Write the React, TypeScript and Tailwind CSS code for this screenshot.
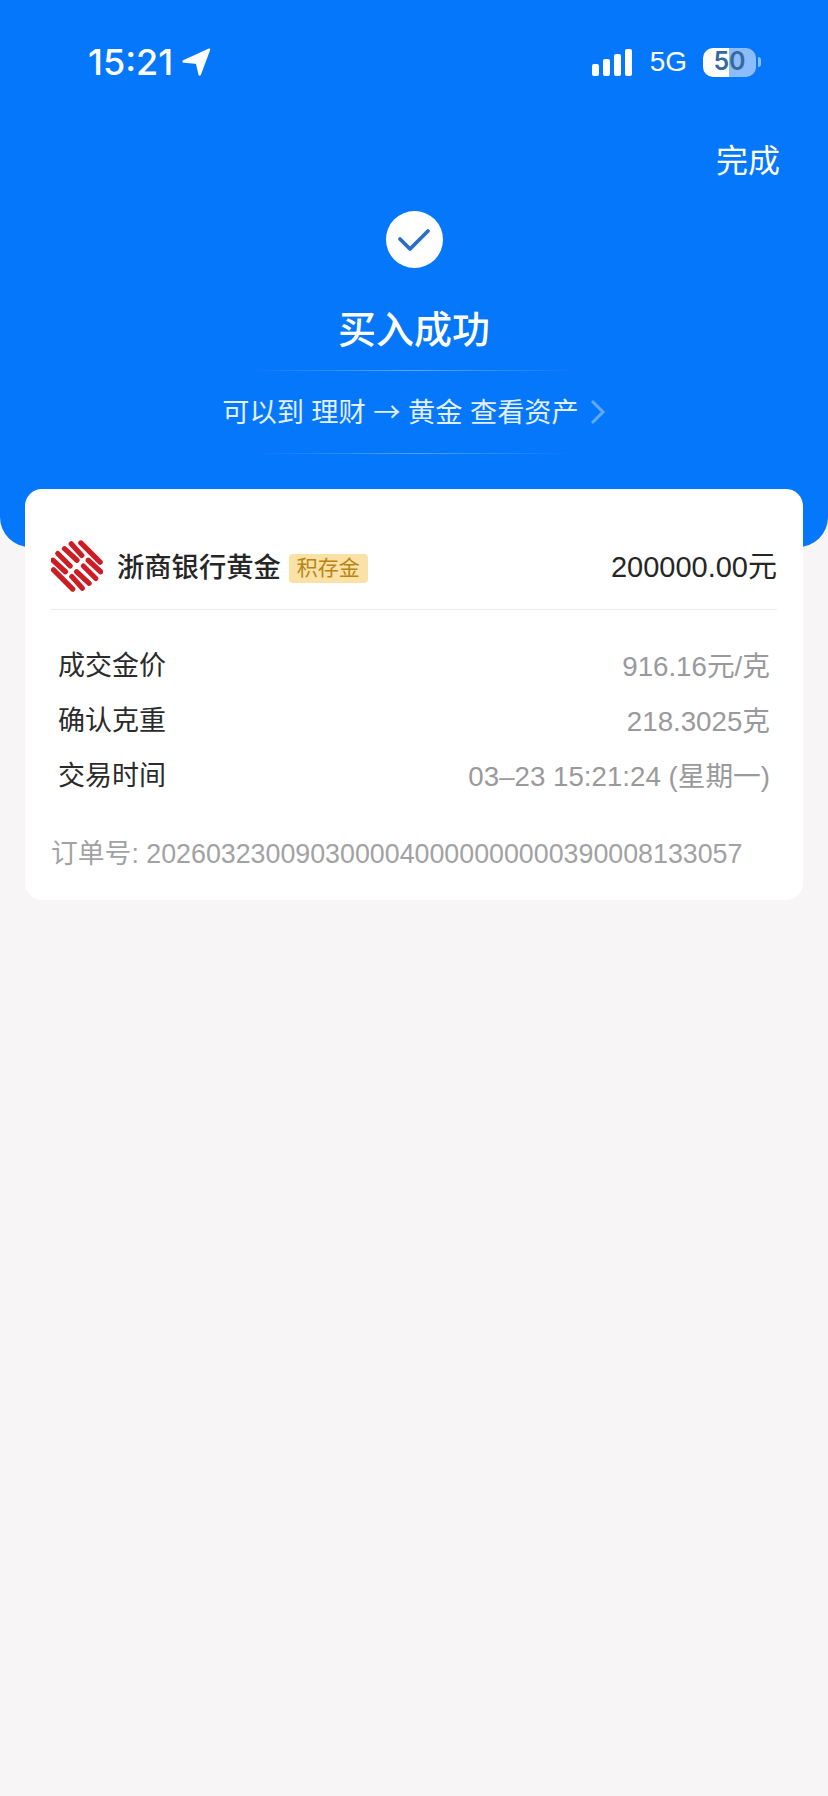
const font = "[font-family:'Liberation_Sans','Noto_Sans_CJK_SC',sans-serif]";

const LocationArrow = () => (
  <svg viewBox="0 0 28 28" className="h-[30px] w-[30px]" fill="#fff">
    <path d="M26 1.5c.8-.4 1.5.3 1.2 1.2L18.6 26c-.5 1.3-2 1.2-2.3-.1l-2.1-9.4c-.1-.5-.4-.8-.9-.8L2.5 14.6c-1.3-.1-1.6-1.7-.5-2.3Z" />
  </svg>
);

const SignalBars = () => (
  <div className="flex h-[28px] items-end gap-[4px]">
    <div className="h-[12px] w-[7px] rounded-[2px] bg-white" />
    <div className="h-[17px] w-[7px] rounded-[2px] bg-white" />
    <div className="h-[22px] w-[7px] rounded-[2px] bg-white" />
    <div className="h-[27px] w-[7px] rounded-[2px] bg-white" />
  </div>
);

const Battery = () => (
  <div className="flex items-center gap-[2px]">
    <div className="flex h-[29px] w-[53px] items-center justify-center rounded-[10px] bg-[linear-gradient(90deg,#fff_50%,#8dbcfb_50%)] text-[25px] font-semibold text-[#35699f] [font-family:Inter,sans-serif]">
      50
    </div>
    <div className="h-[10px] w-[3px] rounded-r-full bg-[#8dbcfb]" />
  </div>
);

const BankLogo = () => {
  const bars = [
    [42, 15, 62, 35],
    [32, 16, 43, 28],
    [25, 21, 38, 33],
    [18, 26, 31, 39],
    [13, 33, 26, 45],
  ];
  return (
    <svg viewBox="11 12 54 54" className="mb-[4px] mr-[2px] h-[52px] w-[52px] shrink-0" stroke="#cc1c24" strokeWidth="5.4" strokeLinecap="round">
      {bars.map(([x1, y1, x2, y2]) => (
        <g key={x1}>
          <line x1={x1} y1={y1} x2={x2} y2={y2} />
          <line x1={75.6 - x1} y1={78 - y1} x2={75.6 - x2} y2={78 - y2} />
        </g>
      ))}
    </svg>
  );
};

const Row = ({ label, value }: { label: string; value: string }) => (
  <div className="flex h-[55px] items-center justify-between px-[7px]">
    <span className="text-[#2b2b2b]">{label}</span>
    <span className="text-[27.7px] text-[#9a9a9c]">{value}</span>
  </div>
);

export default function App() {
  return (
    <div className={`${font} min-h-[1796px] w-[828px] bg-[#f8f5f6]`}>
      <header className="h-[547px] rounded-b-[30px] bg-[#0577fb] text-white">
        <div className="flex items-center justify-between pl-[88px] pr-[67px] pt-[47px]">
          <div className="flex items-center gap-[8px]">
            <span className="text-[36px] leading-[30px] font-medium [font-family:Inter,sans-serif]">15:21</span>
            <LocationArrow />
          </div>
          <div className="flex items-center">
            <SignalBars />
            <span className="ml-[18px] mr-[16px] text-[28px] leading-[30px]">5G</span>
            <Battery />
          </div>
        </div>
        <div className="mt-[64px] pr-[48px] text-right text-[32px] leading-[40px]">完成</div>
        <div className="mt-[30px] flex flex-col items-center">
          <div className="flex h-[57px] w-[57px] items-center justify-center rounded-full bg-white">
            <svg viewBox="0 0 34 24" className="h-[24px] w-[34px]" fill="none" stroke="#2a6fc4" strokeWidth="3.8" strokeLinecap="round" strokeLinejoin="round">
              <path d="M3 11l10 10L31 3" />
            </svg>
          </div>
          <h1 className="mt-[37px] text-[38px] leading-[50px] font-medium">买入成功</h1>
          <div className="mt-[15px] h-px w-[330px] bg-gradient-to-r from-transparent via-white/35 to-transparent" />
          <div className="mt-[24px] flex h-[34px] items-center gap-[11px] text-[27.2px] text-[#e2efff]">
            <span>
              可以到 理财 <span className="[font-family:'Noto_Sans_CJK_SC',sans-serif]">→</span> 黄金 查看资产
            </span>
            <svg viewBox="0 0 16 26" className="h-[26px] w-[16px]" fill="none" stroke="#64a8fb" strokeWidth="3">
              <path d="M2 2l11 11L2 24" />
            </svg>
          </div>
          <div className="mt-[24px] h-px w-[320px] bg-gradient-to-r from-transparent via-white/30 to-transparent" />
        </div>
      </header>

      <main className="relative mx-[25px] -mt-[58px] rounded-[17px] bg-white px-[26px] pb-[26px] text-[27px]">
        <div className="flex h-[121px] items-center justify-between border-b border-[#ececec] pt-[38px]">
          <div className="flex items-center">
            <BankLogo />
            <span className="ml-[12px] text-[27.3px] font-medium text-[#262626]">浙商银行黄金</span>
            <span className="ml-[8px] flex h-[29px] items-center rounded-[4px] bg-[#fae1a6] px-[8px] text-[21px] text-[#b98414]">积存金</span>
          </div>
          <span className="text-[29px] text-[#262626]">200000.00元</span>
        </div>
        <div className="mt-[29px]">
          <Row label="成交金价" value="916.16元/克" />
          <Row label="确认克重" value="218.3025克" />
          <Row label="交易时间" value="03–23 15:21:24 (星期一)" />
        </div>
        <div className="mt-[30px] text-[26.8px] leading-[40px] whitespace-nowrap text-[#a2a2a4]">
          订单号: 2026032300903000040000000000390008133057
        </div>
      </main>
    </div>
  );
}
